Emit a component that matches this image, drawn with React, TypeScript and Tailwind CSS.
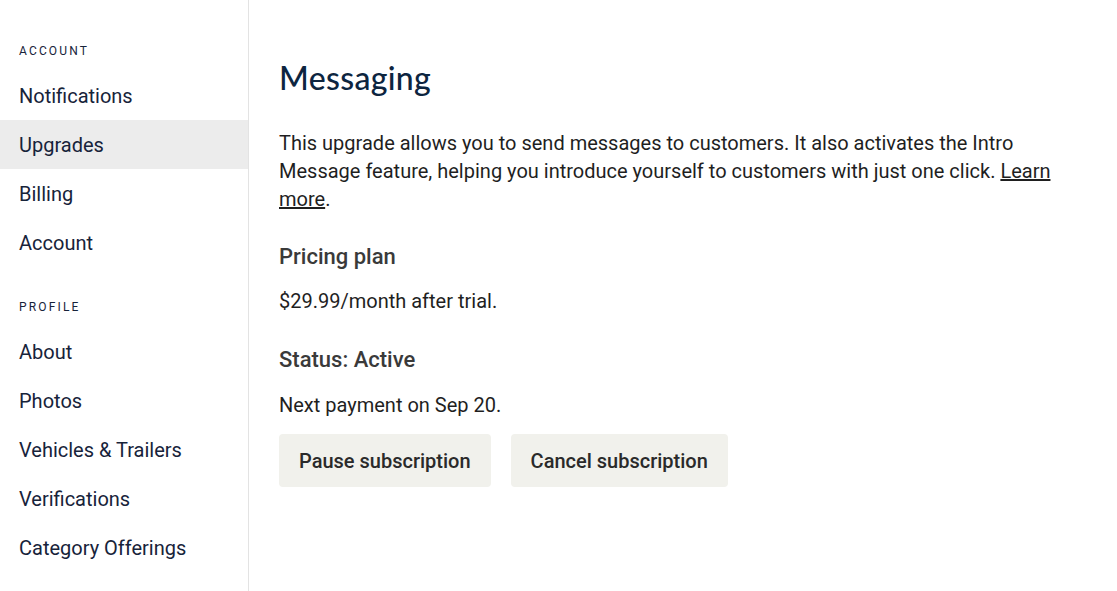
import React from "react";

const accountLinks = ["Notifications", "Upgrades", "Billing", "Account"];
const profileLinks = ["About", "Photos", "Vehicles & Trailers", "Verifications", "Category Offerings"];

function NavItem({ label, active }: { label: string; active?: boolean }) {
  return (
    <div
      className={`h-[49px] flex items-center px-[19px] text-[20px] text-[#17233a] ${
        active ? "bg-[#ececec]" : ""
      }`}
    >
      {label}
    </div>
  );
}

function SectionLabel({ children }: { children: React.ReactNode }) {
  return (
    <p className="px-[19px] text-[12px] tracking-[0.18em] text-[#17233a] uppercase leading-none">
      {children}
    </p>
  );
}

export default function App() {
  return (
    <div className="flex min-h-[591px] bg-white font-['Roboto',sans-serif]">
      {/* Sidebar */}
      <aside className="w-[249px] shrink-0 border-r border-[#e3e3e3] pt-[45px]">
        <SectionLabel>Account</SectionLabel>
        <div className="mt-[14px]">
          {accountLinks.map((l) => (
            <NavItem key={l} label={l} active={l === "Upgrades"} />
          ))}
        </div>
        <div className="mt-[34px]">
          <SectionLabel>Profile</SectionLabel>
        </div>
        <div className="mt-[14px]">
          {profileLinks.map((l) => (
            <NavItem key={l} label={l} />
          ))}
        </div>
      </aside>

      {/* Main */}
      <main className="flex-1 pl-[30px] pr-[50px] pt-[58px] text-[#1f1f1f]">
        <h1 className="font-['Lato',sans-serif] text-[32px] leading-[40px] text-[#0d2540] font-medium tracking-[0.01em]">
          Messaging
        </h1>
        <p className="mt-[31px] text-[20px] leading-[28px]">
          This upgrade allows you to send messages to customers. It also activates the Intro Message feature, helping you
          introduce yourself to customers with just one click.{" "}
          <a className="underline">Learn more</a>.
        </p>
        <h2 className="mt-[30px] text-[22px] leading-[28px] font-medium text-[#3a3a3a]">Pricing plan</h2>
        <p className="mt-[16px] text-[20px] leading-[28px]">$29.99/month after trial.</p>
        <h2 className="mt-[31px] text-[22px] leading-[28px] font-medium text-[#3a3a3a]">Status: Active</h2>
        <p className="mt-[17px] text-[20px] leading-[28px]">Next payment on Sep 20.</p>
        <div className="mt-[15px] flex gap-[20px]">
          <button className="h-[53px] px-[20px] rounded-[4px] bg-[#f1f1ec] text-[20px] font-medium text-[#2a2a2a]">
            Pause subscription
          </button>
          <button className="h-[53px] px-[20px] rounded-[4px] bg-[#f1f1ec] text-[20px] font-medium text-[#2a2a2a]">
            Cancel subscription
          </button>
        </div>
      </main>
    </div>
  );
}
